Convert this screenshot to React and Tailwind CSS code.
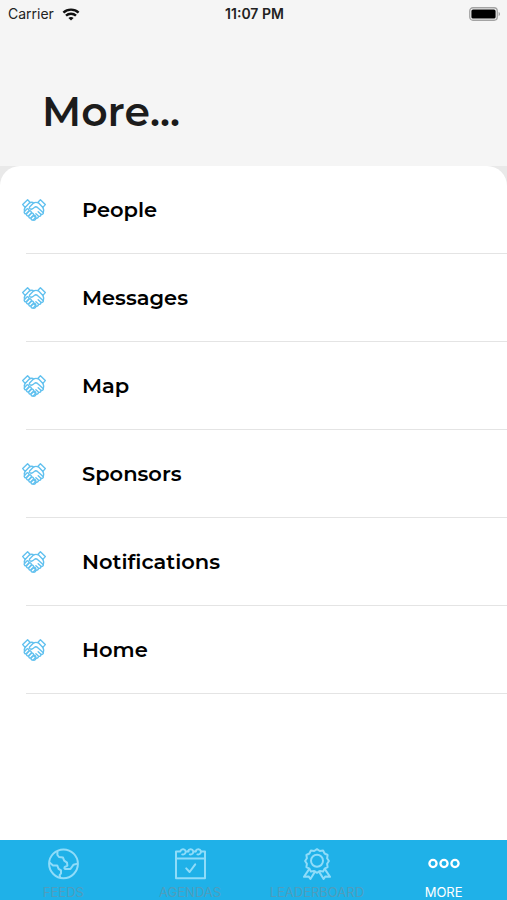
import React from 'react';

const MENU_ITEMS = ['People', 'Messages', 'Map', 'Sponsors', 'Notifications', 'Home'];

const WifiIcon = () => (
  <svg width="18" height="13" viewBox="0 0 18 13" fill="none" stroke="#111" strokeWidth="2.4" aria-hidden="true">
    <path d="M1.4 4.6C5.6.6 12.4.6 16.6 4.6" />
    <path d="M4 7.7c2.8-2.6 7.2-2.6 10 0" />
    <path d="M9 12.6 6.4 10c1.4-1.3 3.8-1.3 5.2 0z" fill="#111" stroke="none" />
  </svg>
);

const BatteryIcon = () => (
  <svg width="32" height="14" viewBox="0 0 32 14" aria-hidden="true">
    <rect x="0.75" y="0.75" width="27.5" height="12.5" rx="3.2" fill="none" stroke="#a3a3a3" strokeWidth="1.3" />
    <rect x="2.4" y="2.4" width="24.2" height="9.2" rx="1.6" fill="#000" />
    <path d="M29.6 5v4.2c.9-.3 1.4-1.1 1.4-2.1s-.5-1.8-1.4-2.1z" fill="#a3a3a3" />
  </svg>
);

const HandshakeIcon = () => (
  <svg
    width="24"
    height="22"
    viewBox="0 0 24 22"
    fill="none"
    stroke="#62c1ef"
    strokeWidth="1.4"
    strokeLinecap="round"
    strokeLinejoin="round"
    aria-hidden="true"
  >
    <path d="M5.6.8 8 3.2 3.1 8.4.7 5.6z" />
    <path d="M18.4.8 16 3.2l4.9 5.2 2.4-2.8z" />
    <path d="M7.600 3.800c1.700-.8 3-.7 4.400.2M16.200 3.800c-2.200-.9-3.800-.5-5.200.8L7.600 7.900c-.9 1.900 1.300 3 3.100 1.800l2.600-1.900c1.200 0 2 .4 2.800 1.200l5.200 4.800" />
    <path d="M3 8.600c-.9 1.200-.9 2.400-.5 3.600M21 8.600c.9 1.800.9 3.600.3 5.200.1 1.300-1.200 2.100-2.400 1.400l-2.700-2.500" />
    <path d="M18.900 15.400c.2 1.600-1.300 2.500-2.500 1.600l-2.500-2.300M16.400 17.200c.1 1.600-1.300 2.500-2.500 1.600l-2-1.900M13.900 19c0 1.800-1.500 2.700-3 1.900" />
    <path d="M4.600 10.200 2.500 12.400c-1 1.500.8 3.100 2.200 1.900l2-2.100c1-1.500-.8-3.200-2.100-2z" />
    <path d="M6.900 12.300 4.700 14.600c-1 1.500.8 3.100 2.200 1.900l2.200-2.300c1-1.500-.9-3.100-2.200-1.900z" />
    <path d="M9.200 14.500 7 16.700c-1 1.500.8 3.100 2.200 1.900l2.100-2.200c1-1.400-.8-3.100-2.100-1.900z" />
    <path d="m11.400 16.700-2.100 2.100c-.9 1.500.9 3 2.200 1.900l1.900-2c1-1.400-.7-3.100-2-2z" />
  </svg>
);

const GlobeIcon = () => (
  <svg width="32" height="32" viewBox="0 0 32 32" fill="none" stroke="currentColor" strokeWidth="2" strokeLinejoin="round" aria-hidden="true">
    <circle cx="16.5" cy="15.8" r="14.4" />
    <path d="M10.4 3v4l1.600 2 4 .6 1.200 3 2.800 2 .4 3-2.800 1.600c-.8 1.400.4 1.800 1.600 1.800h4.200l3-4.200 4.200-1.200" />
    <path d="M2.600 14.600l3.400 2.800h4.200l1.400 3.400 2.400 1.600v3l-1.400 1.800.8 2.800" />
  </svg>
);

const CalendarIcon = () => (
  <svg width="32" height="32" viewBox="0 0 32 32" fill="none" stroke="currentColor" strokeWidth="2" strokeLinecap="round" strokeLinejoin="round" aria-hidden="true">
    <path d="M6 3.600H2v26.600h29V3.600h-3.600M2 10.400h29" />
    <path d="M13 3.600h1.600M20.600 3.600h1.200" />
    <path d="M8.200 6.400c2.200.6 4-1.400 3.400-3.400C10.800.4 7.200.6 6.400 3.200" />
    <path d="M15.800 6.400c2.200.6 4-1.400 3.400-3.400-.8-2.600-4.400-2.400-5.200.2" />
    <path d="M23.400 6.400c2.200.6 4-1.400 3.400-3.400-.8-2.600-4.400-2.400-5.200.2" />
    <path d="m12.200 20.400 3.400 3.600 5.600-7.600" />
  </svg>
);

const RibbonIcon = () => (
  <svg width="32" height="32" viewBox="0 0 32 32" fill="none" stroke="currentColor" strokeWidth="2" strokeLinecap="round" strokeLinejoin="round" aria-hidden="true">
    <path d="M16 1.2 18.8 3l3.3-.5 1.5 3 3 1.5-.5 3.3 1.8 2.7-1.8 2.8.5 3.3-3 1.5-1.5 3-3.3-.5-2.8 1.700-2.800-1.700-3.300.5-1.500-3-3-1.500.5-3.300L4.100 13l1.800-2.700L5.400 7l3-1.500 1.500-3 3.300.5z" />
    <circle cx="16" cy="12.8" r="6" />
    <path d="M7.800 21.600 3 28.800l4.600-.4L9.400 31l4.600-7.400" />
    <path d="m24.200 21.600 4.800 7.200-4.600-.4-1.800 2.600-4.600-7.400" />
  </svg>
);

const DotsIcon = () => (
  <svg width="32" height="32" viewBox="0 0 32 32" fill="none" stroke="currentColor" strokeWidth="2.3" aria-hidden="true">
    <circle cx="5" cy="15.5" r="3.6" />
    <circle cx="16" cy="15.5" r="3.6" />
    <circle cx="27" cy="15.5" r="3.6" />
  </svg>
);

const TABS = [
  { label: 'FEEDS', Icon: GlobeIcon },
  { label: 'AGENDAS', Icon: CalendarIcon },
  { label: 'LEADERBOARD', Icon: RibbonIcon },
  { label: 'MORE', Icon: DotsIcon, active: true },
];

const StatusBar = () => (
  <div className="grid grid-cols-3 items-center h-7 pl-2 pr-1.5 font-['Inter','Liberation_Sans',sans-serif] text-sm text-[#222]">
    <div className="flex items-center gap-2">
      <span>Carrier</span>
      <WifiIcon />
    </div>
    <span className="text-center font-semibold whitespace-nowrap">11:07 PM</span>
    <div className="flex justify-end">
      <BatteryIcon />
    </div>
  </div>
);

const App = () => (
  <div className="min-h-screen flex flex-col bg-white font-['Montserrat','Inter','Liberation_Sans',sans-serif]">
    <header className="bg-[#f5f5f5]">
      <StatusBar />
      <h1 className="px-[42px] pt-14 pb-7 text-[41px] leading-[54px] font-semibold text-[#1c1c1c]">More...</h1>
    </header>

    <main className="flex-1 bg-[#e9e9e9] flex flex-col">
      <ul className="flex-1 bg-white rounded-t-[20px]">
        {MENU_ITEMS.map((item) => (
          <li key={item}>
            <a href="#" className="flex items-center h-[88px] pl-[22px] text-black">
              <HandshakeIcon />
              <span className="pl-9 text-[21px] leading-7 font-semibold">{item}</span>
            </a>
            <div className="-mt-px ml-[26px] h-px bg-[#e4e4e4]" />
          </li>
        ))}
      </ul>
    </main>

    <nav className="grid grid-cols-4 h-[60px] bg-[#1fb1e8] font-['Inter','Liberation_Sans',sans-serif]">
      {TABS.map(({ label, Icon, active }) => (
        <button
          key={label}
          type="button"
          className={`flex flex-col items-center pt-2 ${active ? 'text-white' : 'text-[#8fdcf9]'}`}
        >
          <Icon />
          <span className={`pt-1 text-[13px] leading-4 ${active ? 'text-white' : 'text-[#4f9dbd]'}`}>
            {label}
          </span>
        </button>
      ))}
    </nav>
  </div>
);

export default App;
